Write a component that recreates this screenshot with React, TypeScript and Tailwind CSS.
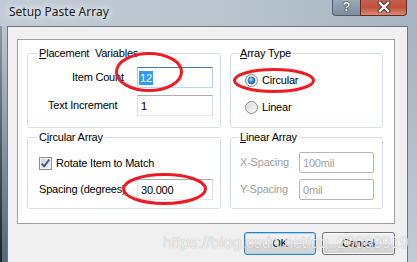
import React from "react";

const UI = "font-['Liberation_Sans',Arial,sans-serif] text-[11px] tracking-[-0.2px] text-black";

function TextBox({
  value,
  selected,
  focused,
  disabled,
  width = "w-[76px]",
}: {
  value: string;
  selected?: boolean;
  focused?: boolean;
  disabled?: boolean;
  width?: string;
}) {
  let cls = "";
  if (disabled) cls = "border border-[#b7b7b7] rounded-[2px] text-[#a0a0a0]";
  else if (focused)
    cls = "border border-t-[#3d7bad] border-x-[#b5cfe7] border-b-[#b7d9ed]";
  else cls = "border border-t-[#abadb3] border-x-[#dbdfe6] border-b-[#e3e9ef]";
  return (
    <div className={`${width} h-[21px] bg-white flex items-center pl-[1px] ${cls}`}>
      {selected ? (
        <span className="bg-[#3399ff] text-white h-[14px] leading-[14px] px-[1px]">{value}</span>
      ) : (
        <span className="pl-[2px] leading-[14px]">{value}</span>
      )}
    </div>
  );
}

function Radio({ checked }: { checked?: boolean }) {
  return (
    <svg width="13" height="13" viewBox="0 0 13 13" className="shrink-0">
      <defs>
        <linearGradient id="rbg" x1="0" y1="0" x2="1" y2="1">
          <stop offset="0" stopColor="#d4d6d8" />
          <stop offset="1" stopColor="#fcfcfc" />
        </linearGradient>
        <radialGradient id="rdot" cx="0.4" cy="0.35" r="0.75">
          <stop offset="0" stopColor="#a6ecff" />
          <stop offset="0.45" stopColor="#2f9ae0" />
          <stop offset="1" stopColor="#0c4f8f" />
        </radialGradient>
      </defs>
      <circle cx="6.5" cy="6.5" r="6" fill="url(#rbg)" stroke="#8a8c8e" />
      <circle cx="6.5" cy="6.5" r="4.6" fill="none" stroke="#e6e7e8" strokeWidth="0.8" />
      {checked && <circle cx="6.5" cy="6.5" r="3.4" fill="url(#rdot)" stroke="#1a4e86" strokeWidth="0.6" />}
    </svg>
  );
}

function Check() {
  return (
    <svg width="13" height="13" viewBox="0 0 13 13" className="shrink-0">
      <defs>
        <linearGradient id="cbg" x1="0" y1="0" x2="1" y2="1">
          <stop offset="0" stopColor="#cfd3d8" />
          <stop offset="1" stopColor="#f4f5f6" />
        </linearGradient>
      </defs>
      <rect x="0.5" y="0.5" width="12" height="12" fill="#f4f4f4" stroke="#8e8f8f" />
      <rect x="2" y="2" width="9" height="9" fill="url(#cbg)" />
      <path d="M2.6 6.6 L5.1 9.4 L10.3 2.6" fill="none" stroke="#44589a" strokeWidth="1.9" strokeLinejoin="round" />
    </svg>
  );
}

function Group({
  title,
  w,
  h,
  legendMl,
  children,
}: {
  title: React.ReactNode;
  w: string;
  h: string;
  legendMl: string;
  children?: React.ReactNode;
}) {
  return (
    <fieldset className={`${w} ${h} border border-[#d5dfe5] rounded-[3px] shrink-0`}>
      <legend className={`${legendMl} px-[2px] leading-[13px]`}>{title}</legend>
      {children}
    </fieldset>
  );
}

export default function App() {
  return (
    <div className="relative w-[417px] h-[262px] overflow-hidden flex flex-col bg-[#aab6c2]">
      {/* title bar */}
      <div className="h-[26px] shrink-0 flex bg-linear-to-r from-[#c3ccd6] via-[#bac5d0] to-[#a7b4c1]">
        <div className="pl-[9px] pt-[4px] leading-[16px] text-[12px] text-[#1a1a1a] font-['Noto_Sans',sans-serif] [text-shadow:0_0_6px_#ffffff,0_0_10px_#ffffff]">
          Setup Paste Array
        </div>
        <div className="ml-auto mr-[10px] flex items-start">
          <div className="w-[28px] h-[16px] rounded-bl-[4px] border border-t-0 border-r-0 border-[#4d5b6c] bg-linear-to-b from-[#9aa8b7] to-[#7e8e9f] flex items-center justify-center">
            <span className="text-white font-bold text-[13px] leading-[13px] font-['Liberation_Sans',sans-serif] [text-shadow:0_0_1px_#222,0_0_1px_#222,0_0_1px_#222] -mt-[3px]">?</span>
          </div>
          <div className="w-[47px] h-[16px] rounded-br-[4px] border border-t-0 border-[#5e2a22] bg-linear-to-b from-[#c46150] via-[#c2503b] to-[#d88a76] flex items-center justify-center">
            <svg width="14" height="12" viewBox="0 0 14 12" className="-mt-[2px]">
              <path d="M3 2 L11 10 M11 2 L3 10" stroke="#3a3a3a" strokeWidth="4.2" strokeLinecap="square" />
              <path d="M3 2 L11 10 M11 2 L3 10" stroke="#ffffff" strokeWidth="2.4" strokeLinecap="square" />
            </svg>
          </div>
        </div>
      </div>

      {/* frame + client */}
      <div className="flex flex-1 min-h-0">
        <div className="w-[7px] flex shrink-0">
          <div className="w-[2px] bg-linear-to-b from-[#8e99a5] to-[#1f2329]" />
          <div className="flex-1 bg-linear-to-b from-[#bdc7d1] to-[#55667b]" />
        </div>

        <div className={`w-[401px] shrink-0 border-l border-t border-r border-[#6b7784] bg-[#f0f0f0] pl-[9px] pr-[12px] pt-[12px] ${UI}`}>
          {/* panel */}
          <div className="h-[185px] border border-[#a0a0a0] bg-white pl-[9px] pr-[11px] pt-[7px] flex flex-col gap-[3px]">
            <div className="flex gap-[9px]">
              <Group
                w="w-[194px]"
                h="h-[81px]"
                legendMl="ml-[9px]"
                title={
                  <>
                    <span className="underline">P</span>lacement&nbsp; Variables
                  </>
                }
              >
                <div className="pt-[7px] flex flex-col gap-[7px]">
                  <div className="flex items-center">
                    <span className="w-[109px] pl-[44px]">Item Count</span>
                    <TextBox value="12" selected focused />
                  </div>
                  <div className="flex items-center">
                    <span className="w-[109px] pl-[20px]">Text Increment</span>
                    <TextBox value="1" />
                  </div>
                </div>
              </Group>
              <Group
                w="w-[153px]"
                h="h-[81px]"
                legendMl="ml-[7px]"
                title={
                  <>
                    <span className="underline">A</span>rray Type
                  </>
                }
              >
                <div className="pt-[14px] pl-[14px] flex flex-col gap-[14px]">
                  <div className="flex items-center gap-[4px] h-[13px]">
                    <Radio checked />
                    <span>Circular</span>
                  </div>
                  <div className="flex items-center gap-[4px] h-[13px]">
                    <Radio />
                    <span>Linear</span>
                  </div>
                </div>
              </Group>
            </div>

            <div className="flex gap-[9px]">
              <Group
                w="w-[194px]"
                h="h-[78px]"
                legendMl="ml-[9px]"
                title={
                  <>
                    C<span className="underline">i</span>rcular Array
                  </>
                }
              >
                <div className="pt-[13px] pl-[11px] flex flex-col gap-[9px]">
                  <div className="flex items-center gap-[4px] h-[13px]">
                    <Check />
                    <span>Rotate Item to Match</span>
                  </div>
                  <div className="flex items-center -ml-[11px]">
                    <span className="w-[109px] pl-[11px]">Spacing (degrees)</span>
                    <TextBox value="30.000" />
                  </div>
                </div>
              </Group>
              <Group
                w="w-[153px]"
                h="h-[78px]"
                legendMl="ml-[7px]"
                title={
                  <>
                    <span className="underline">L</span>inear Array
                  </>
                }
              >
                <div className="pt-[8px] flex flex-col gap-[6px]">
                  <div className="flex items-center">
                    <span className="w-[68px] pl-[9px] text-[#a0a0a0]">X-Spacing</span>
                    <TextBox value="100mil" disabled width="w-[75px]" />
                  </div>
                  <div className="flex items-center">
                    <span className="w-[68px] pl-[9px] text-[#a0a0a0]">Y-Spacing</span>
                    <TextBox value="0mil" disabled width="w-[75px]" />
                  </div>
                </div>
              </Group>
            </div>
          </div>

          {/* buttons */}
          <div className="flex justify-end gap-[6px] mt-[8px]">
            <div className="w-[72px] h-[23px] rounded-[3px] border border-[#3c7fb1] shadow-[inset_0_0_0_1px_#9fd5f5] bg-[linear-gradient(#f2f2f2,#ebebeb_50%,#dddddd_51%,#cfcfcf)] flex items-center justify-center">
              OK
            </div>
            <div className="w-[73px] h-[23px] rounded-[3px] border border-[#707070] shadow-[inset_0_0_0_1px_#fcfcfc] bg-[linear-gradient(#f2f2f2,#ebebeb_50%,#dddddd_51%,#cfcfcf)] flex items-center justify-center">
              Cancel
            </div>
          </div>
        </div>

        <div className="w-[9px] shrink-0 bg-linear-to-b from-[#a7b3bf] to-[#c3cbd3]" />
      </div>

      {/* watermark */}
      <div className="absolute left-[163px] top-[235px] leading-[16px] text-[16px] whitespace-nowrap text-white/80 font-['Liberation_Sans',Arial,sans-serif] [text-shadow:0_0_1px_rgba(0,0,0,0.35)] pointer-events-none">
        https://blog.csdn.net/qq_20099919
      </div>

      {/* red annotation ellipses */}
      <svg className="absolute left-0 top-0 pointer-events-none" width="417" height="262">
        <ellipse cx="149" cy="72" rx="32.5" ry="18.5" fill="none" stroke="#ec1c24" strokeWidth="3" />
        <ellipse cx="274" cy="80.5" rx="39.5" ry="11" fill="none" stroke="#ec1c24" strokeWidth="3" />
        <ellipse cx="164.5" cy="189" rx="41" ry="14.5" fill="none" stroke="#ec1c24" strokeWidth="3" />
      </svg>
    </div>
  );
}
